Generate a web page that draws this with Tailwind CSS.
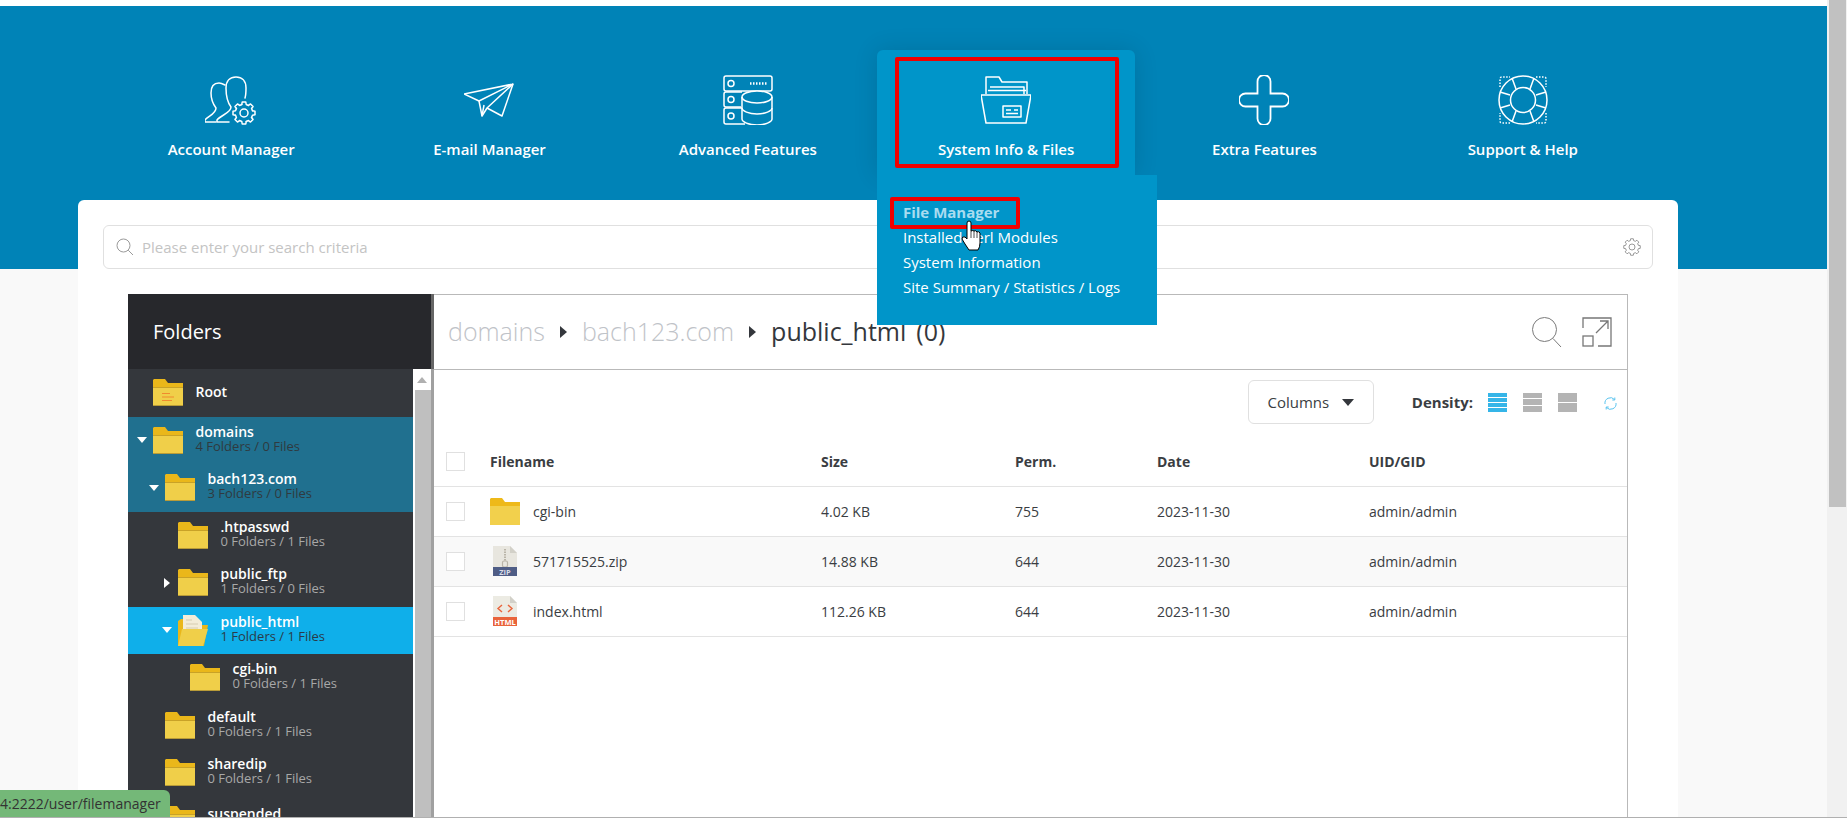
<!DOCTYPE html>
<html lang="en">
<head>
    <meta charset="UTF-8">
    <meta name="viewport" content="width=device-width, initial-scale=1.0">
    <title>File Manager</title>
    <script src="https://cdn.jsdelivr.net/npm/@tailwindcss/browser@4"></script>
</head>
<body class="relative h-[818px] overflow-hidden flex flex-col bg-white font-['Open_Sans',sans-serif] text-[#3a3d42]">
    <!-- shared icons -->
    <svg class="absolute w-0 h-0">
        <defs>
            <symbol id="folder" viewBox="0 0 30 27">
                <path d="M1 0H12L15 4H30V9H0V1Z" fill="#eab71a"/>
                <rect y="8" width="30" height="19" rx="1" fill="#f0cf49"/>
                <rect y="8" width="30" height="1" fill="#c9a227"/>
                <rect y="26" width="30" height="1" fill="#b89b38"/>
            </symbol>
            <symbol id="folder-plain" viewBox="0 0 30 27">
                <path d="M1 0H12L15 4H30V9H0V1Z" fill="#eeb919"/>
                <rect y="8" width="30" height="19" fill="#f2d04c"/>
            </symbol>
            <g id="gear-tooth"><path d="M-2.2-8.5L-1.8-11H1.8L2.2-8.5L4.45-7.56"/></g>
            <g id="gear">
                <use href="#gear-tooth"/>
                <use href="#gear-tooth" transform="rotate(45)"/>
                <use href="#gear-tooth" transform="rotate(90)"/>
                <use href="#gear-tooth" transform="rotate(135)"/>
                <use href="#gear-tooth" transform="rotate(180)"/>
                <use href="#gear-tooth" transform="rotate(225)"/>
                <use href="#gear-tooth" transform="rotate(270)"/>
                <use href="#gear-tooth" transform="rotate(315)"/>
                <circle r="4"/>
            </g>
        </defs>
    </svg>

    <div class="flex-1 min-h-0 flex">
        <main class="flex-1 min-w-0 overflow-hidden bg-[#f9f9f9]">
            <div class="h-[6px] bg-white"></div>

            <!-- top menu -->
            <header class="h-[263px] bg-[#0083b7] pl-[102px] pr-[175px] pt-[44px]">
                <nav class="flex text-white text-[15px] font-semibold leading-5 text-center">
                    <a class="flex-1 h-[125px] pt-[25px] flex flex-col items-center">
                        <svg class="w-[52px] h-[50px]" viewBox="0 0 52 50" fill="none" stroke="white" stroke-width="1.5" stroke-linecap="round" stroke-linejoin="round">
                            <path d="M11 47H0V45C3 41 11 39 11 33C8 29 6 24 6 18C6 11 9 8 14 8C16 8 18 9 20 10"/>
                            <path d="M24 47H12V45C16 40 26 38 26 32C23 28 21 22 21 13C21 6 25 2 31 2C37 2 41 6 41 13C41 17 41 20 40 23"/>
                            <g transform="translate(39 38)"><use href="#gear"/></g>
                        </svg>
                        <span class="mt-[14px]">Account Manager</span>
                    </a>
                    <a class="flex-1 h-[125px] pt-[25px] flex flex-col items-center">
                        <svg class="w-[50px] h-[50px]" viewBox="0 0 50 50" fill="none" stroke="white" stroke-width="1.5" stroke-linejoin="round">
                            <path d="M49 9L0 19L15 26L49 9L38 41L23 33"/>
                            <path d="M15 26L18 41L23 33L49 9"/>
                            <path d="M18 41L20 30"/>
                        </svg>
                        <span class="mt-[14px]">E-mail Manager</span>
                    </a>
                    <a class="flex-1 h-[125px] pt-[25px] flex flex-col items-center">
                        <svg class="w-[50px] h-[50px]" viewBox="0 0 50 50" fill="none" stroke="white" stroke-width="1.5">
                            <rect x="1" y="1" width="48" height="15" rx="2"/>
                            <path d="M19 17H3Q1 17 1 19V30Q1 32 3 32H18"/>
                            <path d="M19 33H3Q1 33 1 35V47Q1 49 3 49H22"/>
                            <circle cx="8" cy="8.5" r="3"/>
                            <circle cx="8" cy="24.5" r="3"/>
                            <circle cx="8" cy="41" r="3"/>
                            <path d="M27 8.5H44" stroke-dasharray="1.5 1.5" stroke-width="2.5"/>
                            <ellipse cx="34" cy="22" rx="15" ry="6" fill="#0083b7"/>
                            <path d="M19 22V44C19 47 26 50 34 50C42 50 49 47 49 44V22"/>
                            <path d="M19 33C19 36 26 39 34 39C42 39 49 36 49 33"/>
                        </svg>
                        <span class="mt-[14px]">Advanced Features</span>
                    </a>
                    <a class="relative z-10 flex-1 h-[125px] pt-[25px] mt-0 flex flex-col items-center bg-[#0095c9] rounded-t-md shadow-[0_0_24px_rgba(0,0,0,0.12)]">
                        <svg class="w-[50px] h-[50px]" viewBox="0 0 50 50" fill="none" stroke="white" stroke-width="1.5" stroke-linejoin="round">
                            <path d="M5 19V2H18L21 7H46V19"/>
                            <path d="M9 12H43V19M7 15.5H45"/>
                            <path d="M0 20H50L45 48H5Z"/>
                            <rect x="22" y="31" width="18" height="11"/>
                            <path d="M25 35H30M33 35H37M25 38.5H37"/>
                        </svg>
                        <span class="mt-[14px]">System Info &amp; Files</span>
                        <!-- dropdown -->
                        <div class="absolute left-0 top-[125px] w-[280px] h-[150px] pt-[25px] pl-[26px] bg-[#0095c9] text-left font-normal leading-[25px]">
                            <div class="font-bold text-[#a9dcf0]">File Manager</div>
                            <div>Installed Perl Modules</div>
                            <div>System Information</div>
                            <div>Site Summary / Statistics / Logs</div>
                        </div>
                    </a>
                    <a class="flex-1 h-[125px] pt-[25px] flex flex-col items-center">
                        <svg class="w-[50px] h-[50px]" viewBox="0 0 50 50" fill="none" stroke="white" stroke-width="1.8">
                            <path d="M18.5 6.5a6.5 6.5 0 0 1 13 0V18.5H43.5a6.5 6.5 0 0 1 0 13H31.5V43.5a6.5 6.5 0 0 1-13 0V31.5H6.5a6.5 6.5 0 0 1 0-13H18.5Z"/>
                        </svg>
                        <span class="mt-[14px]">Extra Features</span>
                    </a>
                    <a class="flex-1 h-[125px] pt-[25px] flex flex-col items-center">
                        <svg class="w-[50px] h-[50px]" viewBox="0 0 50 50" fill="none" stroke="white" stroke-width="1.5">
                            <circle cx="25" cy="25" r="24"/>
                            <circle cx="25" cy="25" r="12.5"/>
                            <path d="M18 14L14 3M32 14L36 3M38 20L48 17M38 30L48 33M32 36L36 47M18 36L14 47M12 30L2 33M12 20L2 17"/>
                            <path d="M2 12V4Q2 2 4 2H12M38 2H46Q48 2 48 4V12M48 38V46Q48 48 46 48H38M12 48H4Q2 48 2 46V38" stroke-dasharray="1.5 1.5"/>
                        </svg>
                        <span class="mt-[14px]">Support &amp; Help</span>
                    </a>
                </nav>
            </header>

            <!-- content card -->
            <section class="relative ml-[78px] w-[1600px] -mt-[69px] h-[617px] overflow-hidden bg-white rounded-t-md">
                <div class="mx-[25px] pt-[25px]">
                    <div class="flex items-center h-[44px] px-[12px] border border-[#e0e0e0] rounded-md bg-white">
                        <svg class="w-[18px] h-[18px] shrink-0" viewBox="0 0 18 18" fill="none" stroke="#9a9a9a" stroke-width="1">
                            <circle cx="7.5" cy="7.5" r="6.5"/><path d="M12.2 12.2L17 17"/>
                        </svg>
                        <input type="text" placeholder="Please enter your search criteria" class="flex-1 ml-[8px] text-[15px] outline-none placeholder:text-[#c4c4c4]">
                        <svg class="w-[18px] h-[18px] shrink-0 -mr-[1px]" viewBox="-12 -12 24 24" fill="none" stroke="#7a7a7a" stroke-width="1"><use href="#gear"/></svg>
                    </div>
                </div>

                <div class="flex mx-[50px] mt-[25px]">
                    <!-- folders panel -->
                    <aside class="w-[303px] shrink-0 h-[600px] flex flex-col">
                        <div class="h-[75px] shrink-0 bg-[#27282c] flex items-center pl-[25px] text-[20px] text-white">Folders</div>
                        <div class="flex-1 min-h-0 flex bg-[#34373c]">
                            <div class="flex-1 min-w-0 text-[14px] leading-[15px] font-semibold text-white">
                                <div class="h-[47.5px] flex items-center pl-[9px]">
                                    <span class="w-[16px]"></span>
                                    <svg class="w-[30px] h-[27px]" viewBox="0 0 30 27">
                                        <use href="#folder"/>
                                        <path d="M9 14.5H17M9 18H21M9 21.5H19" stroke="#f08a2e" stroke-width="1" fill="none"/>
                                    </svg>
                                    <div class="ml-[12.5px] -mt-[3px]">Root</div>
                                </div>
                                <div class="bg-[#20708f]">
                                    <div class="h-[47.5px] flex items-center pl-[9px]">
                                        <span class="w-[16px]"><span class="block w-0 h-0 border-x-[5px] border-x-transparent border-t-[6px] border-t-white"></span></span>
                                        <svg class="w-[30px] h-[27px]"><use href="#folder"/></svg>
                                        <div class="ml-[12.5px] -mt-[3px]">domains<div class="font-normal text-[13px] text-[#2f3a40]">4 Folders / 0 Files</div></div>
                                    </div>
                                    <div class="h-[47.5px] flex items-center pl-[21px]">
                                        <span class="w-[16px]"><span class="block w-0 h-0 border-x-[5px] border-x-transparent border-t-[6px] border-t-white"></span></span>
                                        <svg class="w-[30px] h-[27px]"><use href="#folder"/></svg>
                                        <div class="ml-[12.5px] -mt-[3px]">bach123.com<div class="font-normal text-[13px] text-[#2f3a40]">3 Folders / 0 Files</div></div>
                                    </div>
                                </div>
                                <div class="h-[47.5px] flex items-center pl-[34px]">
                                    <span class="w-[16px]"></span>
                                    <svg class="w-[30px] h-[27px]"><use href="#folder"/></svg>
                                    <div class="ml-[12.5px] -mt-[3px]">.htpasswd<div class="font-normal text-[13px] text-[#a8a8a8]">0 Folders / 1 Files</div></div>
                                </div>
                                <div class="h-[47.5px] flex items-center pl-[34px]">
                                    <span class="w-[16px]"><span class="block ml-[2px] w-0 h-0 border-y-[5px] border-y-transparent border-l-[6px] border-l-white"></span></span>
                                    <svg class="w-[30px] h-[27px]"><use href="#folder"/></svg>
                                    <div class="ml-[12.5px] -mt-[3px]">public_ftp<div class="font-normal text-[13px] text-[#a8a8a8]">1 Folders / 0 Files</div></div>
                                </div>
                                <div class="h-[47.5px] flex items-center pl-[34px] bg-[#0fafea]">
                                    <span class="w-[16px]"><span class="block w-0 h-0 border-x-[5px] border-x-transparent border-t-[6px] border-t-white"></span></span>
                                    <svg class="w-[30px] h-[31px]" viewBox="0 0 30 31">
                                        <path d="M3 4H8V10H30L26 31H0V6Z" fill="#eab71a"/>
                                        <path d="M5 0H17L24 7V18H5Z" fill="#f3ecd7"/>
                                        <path d="M8 5H14M8 9H20M8 13H20" stroke="#d6ccb0" stroke-width="1"/>
                                        <path d="M4 14H30L25 31H0Z" fill="#f0cf49"/>
                                    </svg>
                                    <div class="ml-[12.5px] -mt-[3px]">public_html<div class="font-normal text-[13px] text-[#2a3a48]">1 Folders / 1 Files</div></div>
                                </div>
                                <div class="h-[47.5px] flex items-center pl-[46px]">
                                    <span class="w-[16px]"></span>
                                    <svg class="w-[30px] h-[27px]"><use href="#folder"/></svg>
                                    <div class="ml-[12.5px] -mt-[3px]">cgi-bin<div class="font-normal text-[13px] text-[#a8a8a8]">0 Folders / 1 Files</div></div>
                                </div>
                                <div class="h-[47.5px] flex items-center pl-[21px]">
                                    <span class="w-[16px]"></span>
                                    <svg class="w-[30px] h-[27px]"><use href="#folder"/></svg>
                                    <div class="ml-[12.5px] -mt-[3px]">default<div class="font-normal text-[13px] text-[#a8a8a8]">0 Folders / 1 Files</div></div>
                                </div>
                                <div class="h-[47.5px] flex items-center pl-[21px]">
                                    <span class="w-[16px]"></span>
                                    <svg class="w-[30px] h-[27px]"><use href="#folder"/></svg>
                                    <div class="ml-[12.5px] -mt-[3px]">sharedip<div class="font-normal text-[13px] text-[#a8a8a8]">0 Folders / 1 Files</div></div>
                                </div>
                                <div class="flex items-start pt-[9px] pl-[21px]">
                                    <span class="w-[16px]"></span>
                                    <svg class="w-[30px] h-[27px]"><use href="#folder"/></svg>
                                    <div class="ml-[12.5px]">suspended</div>
                                </div>
                            </div>
                            <!-- tree scrollbar -->
                            <div class="w-[18px] shrink-0 flex flex-col bg-white">
                                <div class="h-[21px] flex items-center justify-center"><span class="w-0 h-0 border-x-[5px] border-x-transparent border-b-[6px] border-b-[#b0b0b0]"></span></div>
                                <div class="flex-1 ml-[2px] bg-[#bfbfbf]"></div>
                            </div>
                        </div>
                    </aside>
                    <div class="w-[3px] shrink-0 h-[600px] flex flex-col"><div class="h-[75px] bg-[#666]"></div><div class="flex-1 bg-[#a0a0a0]"></div></div>

                    <!-- files panel -->
                    <div class="flex-1 min-w-0 h-[600px] border-t border-r border-[#b9b9b9]">
                        <div class="h-[75px] flex items-center border-b border-[#b9b9b9] pl-[14px] pr-[15px] text-[25px] font-light">
                            <span class="text-[#bfc3c8]">domains</span>
                            <svg class="w-[7px] h-[12px] mx-[15px]" viewBox="0 0 7 12"><path d="M0 0L7 6L0 12Z" fill="#34373c"/></svg>
                            <span class="text-[#bfc3c8]">bach123.com</span>
                            <svg class="w-[7px] h-[12px] mx-[15px]" viewBox="0 0 7 12"><path d="M0 0L7 6L0 12Z" fill="#34373c"/></svg>
                            <span class="text-[#34373c] font-normal">public_html</span>
                            <span class="ml-[10px] text-[#34373c] font-normal">(0)</span>
                            <svg class="ml-auto w-[30px] h-[30px]" viewBox="0 0 30 30" fill="none" stroke="#7a7a7a" stroke-width="1">
                                <circle cx="12.5" cy="12.5" r="12"/><path d="M21 21.5L29 30"/>
                            </svg>
                            <svg class="ml-[20px] w-[30px] h-[30px]" viewBox="0 0 30 30" fill="none" stroke="#777" stroke-width="1.3">
                                <path d="M1 11V1H29V29H16"/><rect x="1" y="19" width="10" height="10"/><path d="M14 16L26 4M18 4H26V12"/>
                            </svg>
                        </div>
                        <div class="h-[67px] flex items-start justify-end pt-[10px] pr-[10px] text-[15px]">
                            <div class="w-[126px] h-[44px] flex items-center justify-center gap-[13px] border border-[#e0e0e0] rounded-md">
                                Columns
                                <span class="w-0 h-0 border-x-[6px] border-x-transparent border-t-[7px] border-t-[#34373c]"></span>
                            </div>
                            <div class="h-[44px] flex items-center ml-[38px] font-bold">Density:</div>
                            <div class="h-[44px] flex items-center ml-[15px] gap-[16px]">
                                <div class="w-[19px] h-[19px] flex flex-col gap-px">
                                    <div class="flex-1 bg-[#35b5e8]"></div><div class="flex-1 bg-[#35b5e8]"></div><div class="flex-1 bg-[#35b5e8]"></div><div class="flex-1 bg-[#35b5e8]"></div>
                                </div>
                                <div class="w-[19px] h-[19px] flex flex-col gap-px">
                                    <div class="flex-1 bg-[#b4b4b4]"></div><div class="flex-1 bg-[#b4b4b4]"></div><div class="flex-1 bg-[#b4b4b4]"></div>
                                </div>
                                <div class="w-[19px] h-[19px] flex flex-col gap-px">
                                    <div class="flex-1 bg-[#b4b4b4]"></div><div class="flex-1 bg-[#b4b4b4]"></div>
                                </div>
                            </div>
                            <div class="h-[44px] flex items-center ml-[27px]">
                                <svg class="w-[13px] h-[13px] mt-[2px]" viewBox="0 0 13 13" fill="none" stroke="#59c3ee" stroke-width="1">
                                    <path d="M1 7A5.5 5.5 0 0 1 10.5 2.5M12 6A5.5 5.5 0 0 1 2.5 10.5"/><path d="M10.8 0.5V3H8.3M2.2 12.5V10H4.7"/>
                                </svg>
                            </div>
                        </div>
                        <table class="w-full table-fixed text-[14px] text-left">
                            <colgroup><col class="w-[56px]"><col class="w-[331px]"><col class="w-[194px]"><col class="w-[142px]"><col class="w-[212px]"><col></colgroup>
                            <thead class="font-bold">
                                <tr class="h-[49px] border-b border-[#e3e3e3]">
                                    <th class="pl-[12px]"><div class="w-[19px] h-[19px] border border-[#e0e0e0]"></div></th>
                                    <th class="font-bold">Filename</th><th class="font-bold">Size</th><th class="font-bold">Perm.</th><th class="font-bold">Date</th><th class="font-bold">UID/GID</th>
                                </tr>
                            </thead>
                            <tbody>
                                <tr class="h-[50px] border-b border-[#e3e3e3]">
                                    <td class="pl-[12px]"><div class="w-[19px] h-[19px] border border-[#e0e0e0]"></div></td>
                                    <td><div class="flex items-center"><svg class="w-[30px] h-[27px]"><use href="#folder-plain"/></svg><span class="ml-[13px]">cgi-bin</span></div></td>
                                    <td>4.02 KB</td><td>755</td><td>2023-11-30</td><td>admin/admin</td>
                                </tr>
                                <tr class="h-[50px] border-b border-[#e3e3e3] bg-[#f9f9f9]">
                                    <td class="pl-[12px]"><div class="w-[19px] h-[19px] border border-[#e0e0e0] bg-white"></div></td>
                                    <td><div class="flex items-center">
                                        <svg class="w-[24px] h-[30px] ml-[3px]" viewBox="0 0 24 30">
                                            <path d="M0 0H17L24 7V30H0Z" fill="#e8e6df"/>
                                            <path d="M17 0L24 7H17Z" fill="#d2d0c8"/>
                                            <path d="M12 3V15" stroke="#b9b4a8" stroke-width="2" stroke-dasharray="1.5 1"/>
                                            <rect x="9.5" y="15" width="5" height="6" rx="1.5" fill="none" stroke="#b9b4a8" stroke-width="1.2"/>
                                            <rect y="21" width="24" height="9" fill="#4f5d86"/>
                                            <text x="12" y="28.5" text-anchor="middle" font-size="7.5" font-weight="700" fill="#d9dce6" font-family="Open Sans, sans-serif">ZIP</text>
                                        </svg>
                                        <span class="ml-[16px]">571715525.zip</span></div></td>
                                    <td>14.88 KB</td><td>644</td><td>2023-11-30</td><td>admin/admin</td>
                                </tr>
                                <tr class="h-[50px] border-b border-[#e3e3e3]">
                                    <td class="pl-[12px]"><div class="w-[19px] h-[19px] border border-[#e0e0e0]"></div></td>
                                    <td><div class="flex items-center">
                                        <svg class="w-[24px] h-[30px] ml-[3px]" viewBox="0 0 24 30">
                                            <path d="M0 0H17L24 7V30H0Z" fill="#ecebe3"/>
                                            <path d="M17 0L24 7H17Z" fill="#d2d0c8"/>
                                            <path d="M9 9L5 12.5L9 16M15 9L19 12.5L15 16" fill="none" stroke="#e9643b" stroke-width="1.4"/>
                                            <rect y="21" width="24" height="9" fill="#e9643b"/>
                                            <text x="12" y="28.5" text-anchor="middle" font-size="7.5" font-weight="700" fill="#fff" font-family="Open Sans, sans-serif">HTML</text>
                                        </svg>
                                        <span class="ml-[16px]">index.html</span></div></td>
                                    <td>112.26 KB</td><td>644</td><td>2023-11-30</td><td>admin/admin</td>
                                </tr>
                            </tbody>
                        </table>
                    </div>
                </div>
            </section>
        </main>

        <!-- browser scrollbar -->
        <div class="w-[20px] shrink-0 bg-[#f1f1f1] pl-[2px] pr-px">
            <div class="h-[507px] bg-[#c1c1c1]"></div>
        </div>
    </div>
    <div class="h-px shrink-0 bg-[#b0b0b0]"></div>

    <!-- screenshot annotations, cursor, status bubble -->
    <div class="absolute left-[895px] top-[57px] w-[224px] h-[111px] border-[4px] border-[#f00000] rounded-[2px] z-20"></div>
    <div class="absolute left-[890px] top-[197px] w-[130px] h-[32px] border-[4px] border-[#f00000] rounded-[2px] z-20"></div>
    <svg class="absolute left-[961px] top-[220px] w-[22px] h-[31px] z-30" viewBox="0 0 22 31" stroke="#000" stroke-width="1" stroke-linejoin="round">
        <path d="M6 3Q6 1 8 1Q10 1 10 3V11Q12 10 13 11Q15 10 16 12Q18 11 19 13V23Q19 27 17 30H8Q6 27 4 24L1 19Q1 16 4 17L6 19Z" fill="#fff"/>
        <path d="M10 11V18M13 11V18M16 12V18" fill="none" stroke-width="0.7"/>
    </svg>
    <div class="absolute left-0 bottom-px w-[170px] h-[27px] bg-[#74b878] rounded-tr-md z-20 flex items-center text-[14px] text-[#333] whitespace-nowrap">4:2222/user/filemanager</div>
</body>
</html>
